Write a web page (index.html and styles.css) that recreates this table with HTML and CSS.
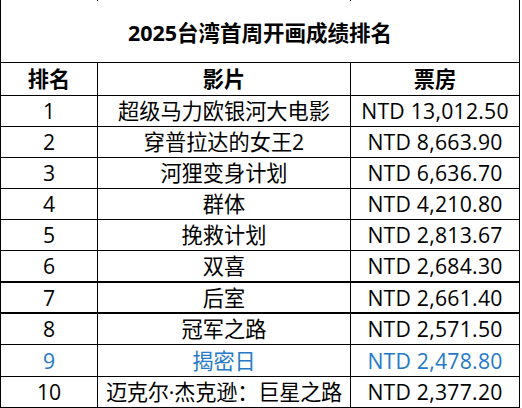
FILE: index.html
```html
<!DOCTYPE html>
<html lang="zh-CN">
<head>
<meta charset="utf-8">
<title>2025台湾首周开画成绩排名</title>
<link rel="stylesheet" href="styles.css">
</head>
<body>
<div class="sheet">
  <div class="row stub">
    <div class="cell"></div>
    <div class="cell"></div>
    <div class="cell"></div>
  </div>
  <div class="title">2025台湾首周开画成绩排名</div>
  <div class="row head">
    <div class="cell">排名</div>
    <div class="cell">影片</div>
    <div class="cell">票房</div>
  </div>
  <div class="row">
    <div class="cell">1</div>
    <div class="cell">超级马力欧银河大电影</div>
    <div class="cell money">NTD 13,012.50</div>
  </div>
  <div class="row">
    <div class="cell">2</div>
    <div class="cell">穿普拉达的女王2</div>
    <div class="cell money">NTD 8,663.90</div>
  </div>
  <div class="row">
    <div class="cell">3</div>
    <div class="cell">河狸变身计划</div>
    <div class="cell money">NTD 6,636.70</div>
  </div>
  <div class="row">
    <div class="cell">4</div>
    <div class="cell">群体</div>
    <div class="cell money">NTD 4,210.80</div>
  </div>
  <div class="row">
    <div class="cell">5</div>
    <div class="cell">挽救计划</div>
    <div class="cell money">NTD 2,813.67</div>
  </div>
  <div class="row tall thick">
    <div class="cell">6</div>
    <div class="cell">双喜</div>
    <div class="cell money">NTD 2,684.30</div>
  </div>
  <div class="row thick">
    <div class="cell">7</div>
    <div class="cell">后室</div>
    <div class="cell money">NTD 2,661.40</div>
  </div>
  <div class="row">
    <div class="cell">8</div>
    <div class="cell">冠军之路</div>
    <div class="cell money">NTD 2,571.50</div>
  </div>
  <div class="row tall blue">
    <div class="cell">9</div>
    <div class="cell">揭密日</div>
    <div class="cell money">NTD 2,478.80</div>
  </div>
  <div class="row">
    <div class="cell">10</div>
    <div class="cell wide">迈克尔·杰克逊：巨星之路</div>
    <div class="cell money">NTD 2,377.20</div>
  </div>
</div>
</body>
</html>
```

FILE: styles.css
```css
html, body {
  margin: 0;
  padding: 0;
  background: #ffffff;
}

body {
  width: 522px;
  height: 408px;
  overflow: hidden;
  font-family: "Open Sans", "Noto Sans CJK SC", sans-serif;
  font-size: 21.2px;
  color: #000000;
}

.sheet {
  width: 520px;
  box-sizing: border-box;
  border-left: 1px solid #000000;
  border-right: 1px solid #000000;
}

.title {
  height: 62px;
  box-sizing: border-box;
  border-bottom: 1px solid #000000;
  display: flex;
  align-items: center;
  justify-content: center;
  font-weight: 700;
  font-size: 21.5px;
}

.row {
  display: grid;
  grid-template-columns: 97px 253px 168px;
  height: 31px;
  box-sizing: border-box;
  border-bottom: 1px solid #000000;
}

.row.stub {
  height: 1px;
  border-bottom: 0;
}

.row.head {
  height: 33px;
  font-weight: 700;
}

.row.tall {
  height: 32px;
}

.row.thick {
  border-bottom-width: 2px;
}

.row.blue {
  color: #2479c8;
}

.cell {
  display: flex;
  align-items: center;
  justify-content: center;
  white-space: nowrap;
  overflow: visible;
  line-height: 1;
}

.cell:nth-child(1),
.cell:nth-child(2) {
  border-right: 1px solid #000000;
}

.cell.money {
  letter-spacing: 0.25px;
}

.cell.wide {
  letter-spacing: -0.2px;
}
```
